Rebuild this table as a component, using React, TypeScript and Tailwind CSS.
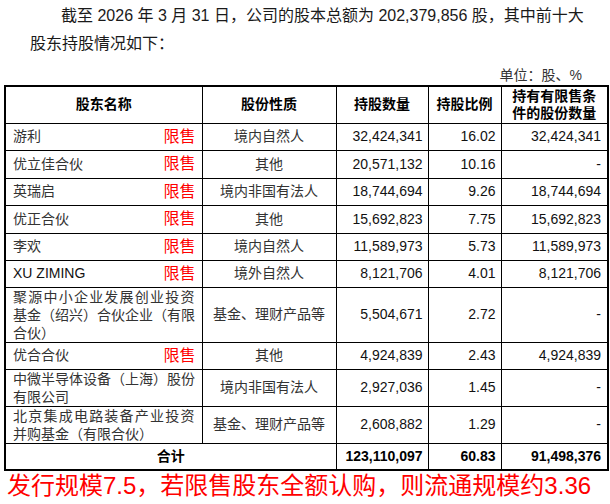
import React from "react";

type Row = {
  name: string[];
  restricted: boolean;
  nature: string;
  shares: string;
  ratio: string;
  locked: string;
  h: string;
};

const rows: Row[] = [
  { name: ["游利"], restricted: true, nature: "境内自然人", shares: "32,424,341", ratio: "16.02", locked: "32,424,341", h: "h-[27px]" },
  { name: ["优立佳合伙"], restricted: true, nature: "其他", shares: "20,571,132", ratio: "10.16", locked: "-", h: "h-[28px]" },
  { name: ["英瑞启"], restricted: true, nature: "境内非国有法人", shares: "18,744,694", ratio: "9.26", locked: "18,744,694", h: "h-[27px]" },
  { name: ["优正合伙"], restricted: true, nature: "其他", shares: "15,692,823", ratio: "7.75", locked: "15,692,823", h: "h-[28px]" },
  { name: ["李欢"], restricted: true, nature: "境内自然人", shares: "11,589,973", ratio: "5.73", locked: "11,589,973", h: "h-[27px]" },
  { name: ["XU ZIMING"], restricted: true, nature: "境外自然人", shares: "8,121,706", ratio: "4.01", locked: "8,121,706", h: "h-[27px]" },
  {
    name: ["聚源中小企业发展创业投资", "基金（绍兴）合伙企业（有限", "合伙）"],
    restricted: false,
    nature: "基金、理财产品等",
    shares: "5,504,671",
    ratio: "2.72",
    locked: "-",
    h: "h-[55px]",
  },
  { name: ["优合合伙"], restricted: true, nature: "其他", shares: "4,924,839", ratio: "2.43", locked: "4,924,839", h: "h-[27px]" },
  { name: ["中微半导体设备（上海）股份", "有限公司"], restricted: false, nature: "境内非国有法人", shares: "2,927,036", ratio: "1.45", locked: "-", h: "h-[36px]" },
  { name: ["北京集成电路装备产业投资", "并购基金（有限合伙）"], restricted: false, nature: "基金、理财产品等", shares: "2,608,882", ratio: "1.29", locked: "-", h: "h-[37px]" },
];

const font = "font-['Liberation_Sans','Noto_Sans_CJK_SC',sans-serif]";

function NameCell({ lines, restricted }: { lines: string[]; restricted: boolean }) {
  if (lines.length > 1) {
    return (
      <div className="pl-[7px] pr-[7px] leading-[18px] text-[14px] text-[#333]">
        {lines.map((l, i) => (
          <span
            key={i}
            className={`block whitespace-nowrap ${i < lines.length - 1 ? "text-justify [text-align-last:justify]" : ""}`}
          >
            {l}
          </span>
        ))}
      </div>
    );
  }
  return (
    <div className="flex items-center justify-between pl-[7px] pr-[6px]">
      <span className={`text-[14px] ${lines[0] === "XU ZIMING" ? "text-[#111]" : "text-[#333]"}`}>{lines[0]}</span>
      {restricted && <span className="text-[16px] leading-none text-[#ff0000]">限售</span>}
    </div>
  );
}

export default function App() {
  return (
    <div className={`w-[610px] h-[504px] bg-white overflow-hidden ${font}`}>
      <p className="pt-[2px] pl-[30px] text-[16px] leading-[28px] text-[#1a1a1a] whitespace-nowrap">
        <span className="pl-[31px]">截至 2026 年 3 月 31 日，公司的股本总额为 202,379,856 股，其中前十大</span>
        <br />
        股东持股情况如下：
      </p>
      <div className="mt-[7px] pr-[28px] text-right text-[14px] leading-[20px] text-[#333]">单位：股、%</div>
      <div className="pl-[4px]">
        <table className="w-[603px] table-fixed border-collapse border-2 border-black text-[14px] text-[#111]">
          <colgroup>
            <col className="w-[197px]" />
            <col className="w-[134px]" />
            <col className="w-[92px]" />
            <col className="w-[73px]" />
            <col className="w-[107px]" />
          </colgroup>
          <thead>
            <tr className="h-[37px] font-bold text-black">
              <th className="border border-black p-0 text-center">股东名称</th>
              <th className="border border-black p-0 text-center">股份性质</th>
              <th className="border border-black p-0 text-center">持股数量</th>
              <th className="border border-black p-0 text-center">持股比例</th>
              <th className="border border-black p-0 text-center leading-[17px]">
                持有有限售条
                <br />
                件的股份数量
              </th>
            </tr>
          </thead>
          <tbody>
            {rows.map((r, i) => (
              <tr key={i} className={r.h}>
                <td className="border border-black p-0 align-middle">
                  <NameCell lines={r.name} restricted={r.restricted} />
                </td>
                <td className="border border-black p-0 text-center text-[#333]">{r.nature}</td>
                <td className="border border-black p-0 pr-[5px] text-right">{r.shares}</td>
                <td className="border border-black p-0 pr-[5px] text-right">{r.ratio}</td>
                <td className="border border-black p-0 pr-[6px] text-right">{r.locked}</td>
              </tr>
            ))}
            <tr className="h-[27px] font-bold text-black">
              <td colSpan={2} className="border border-black p-0 text-center">
                合计
              </td>
              <td className="border border-black p-0 pr-[5px] text-right">123,110,097</td>
              <td className="border border-black p-0 pr-[5px] text-right">60.83</td>
              <td className="border border-black p-0 pr-[6px] text-right">91,498,376</td>
            </tr>
          </tbody>
        </table>
      </div>
      <div className="pl-[7px] text-[24px] leading-[30px] text-[#ff0000] whitespace-nowrap">
        发行规模7.5，若限售股东全额认购，则流通规模约3.36
      </div>
    </div>
  );
}
